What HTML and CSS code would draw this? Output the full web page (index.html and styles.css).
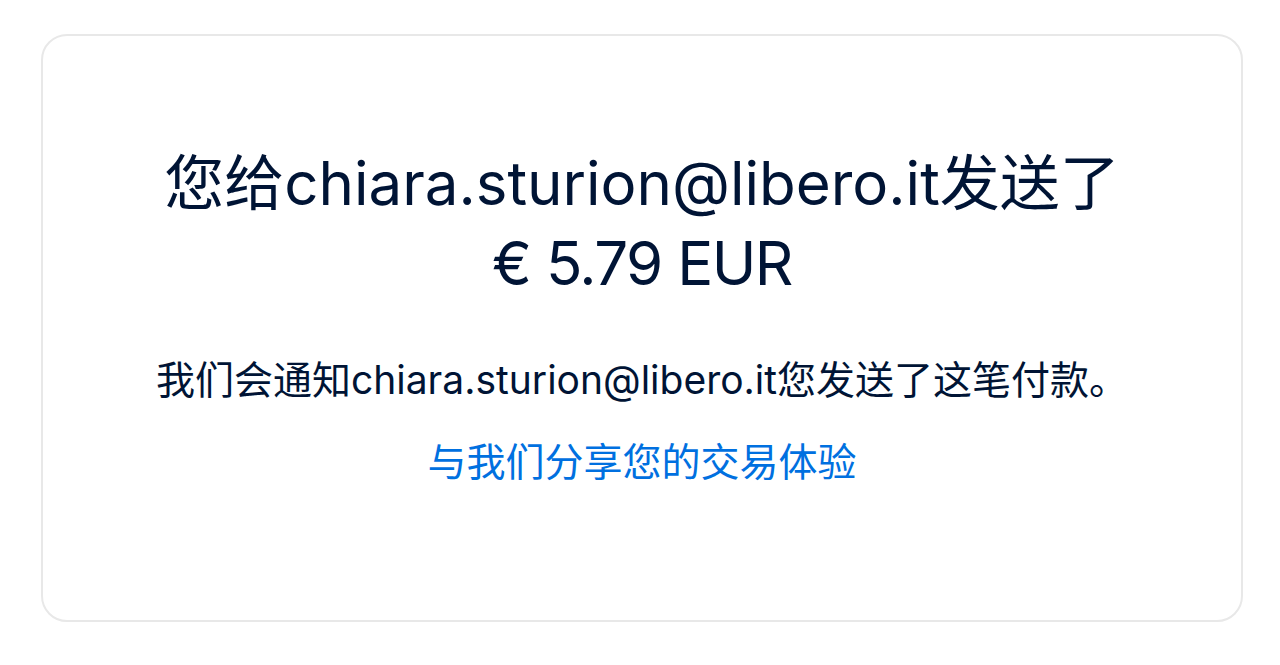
FILE: index.html
```html
<!DOCTYPE html>
<html lang="zh-CN">
<head>
    <meta charset="UTF-8">
    <meta name="viewport" content="width=device-width, initial-scale=1.0">
    <title>付款已发送</title>
    <link rel="stylesheet" href="styles.css">
</head>
<body>
    <div class="page">
        <div class="card">
            <h1 class="title">您给chiara.sturion@libero.it发送了<br><span class="amount">€ 5.79 EUR</span></h1>
            <p class="note">我们会通知chiara.sturion@libero.it您发送了这笔付款。</p>
            <a class="feedback" href="#">与我们分享您的交易体验</a>
        </div>
    </div>
</body>
</html>
```

FILE: styles.css
```css
body {
    margin: 0;
    padding: 0;
    background: #fff;
    font-family: Inter, "Noto Sans CJK SC", sans-serif;
    color: #001435;
}

.page {
    padding: 34px 37px 0 41px;
}

.card {
    height: 588px;
    border: 2px solid #e8e8e8;
    border-radius: 26px;
    display: flex;
    flex-direction: column;
    align-items: center;
    padding-top: 107px;
    box-sizing: border-box;
}

.title {
    margin: 0;
    font-size: 60px;
    font-weight: 400;
    line-height: 80px;
    text-align: center;
}

.amount {
    letter-spacing: -1.5px;
}

.note {
    margin: 53px 0 0;
    font-size: 39px;
    line-height: 48px;
}

.feedback {
    margin-top: 34px;
    font-size: 39px;
    line-height: 48px;
    color: #0070e0;
    text-decoration: none;
}
```
